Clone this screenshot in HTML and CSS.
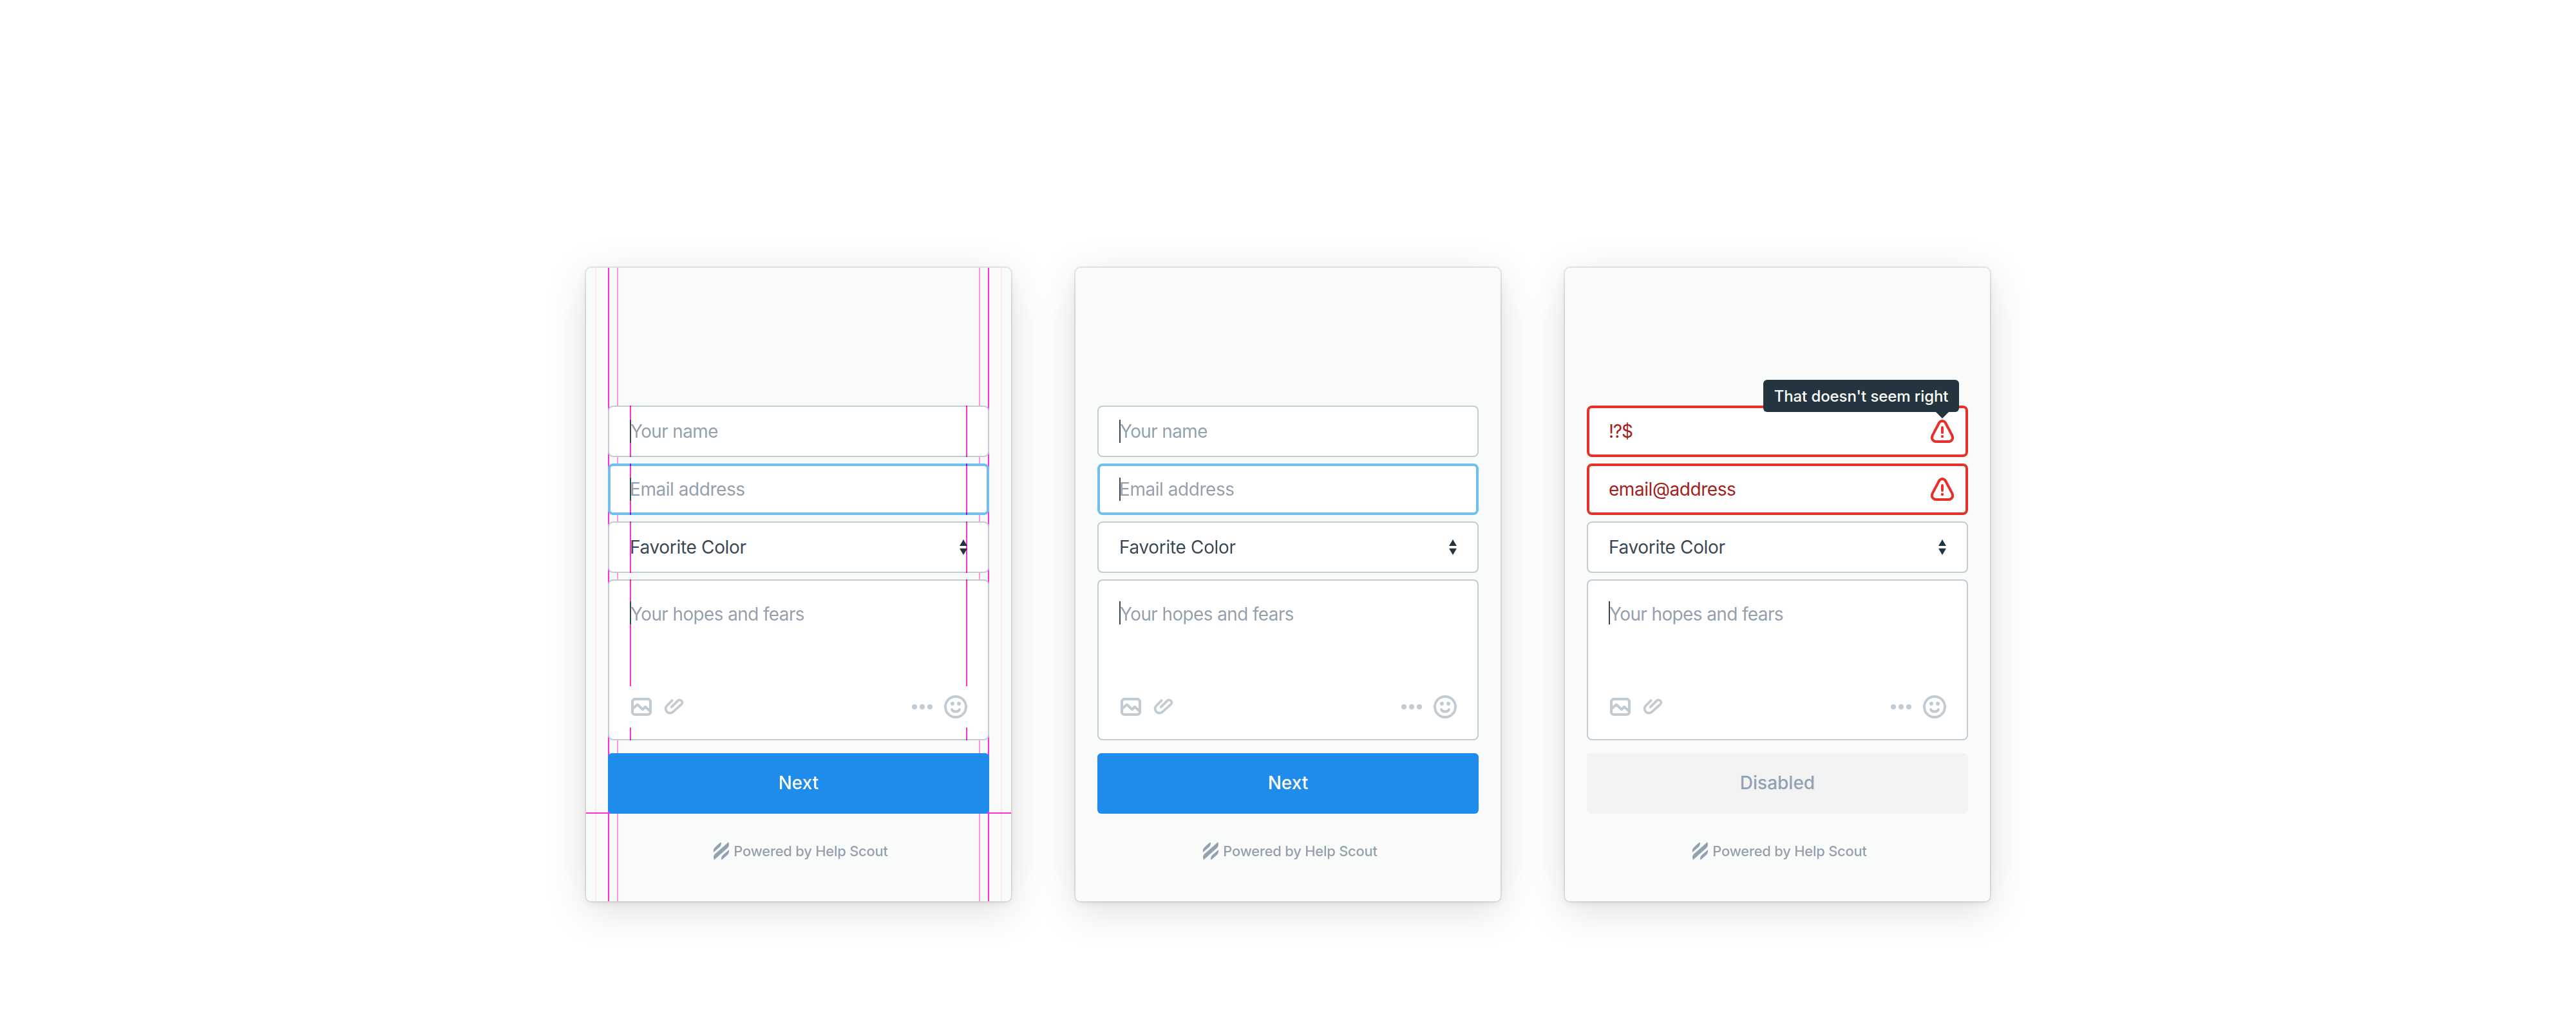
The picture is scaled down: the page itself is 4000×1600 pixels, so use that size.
FILE: index.html
```html
<!DOCTYPE html>
<html lang="en">
<head>
<meta charset="utf-8">
<title>Form states</title>
<link rel="stylesheet" href="styles.css">
</head>
<body>
<svg class="sprite" aria-hidden="true">
  <symbol id="image" viewBox="0 0 32 28"><rect x="2" y="2" width="28" height="24" rx="4" fill="none" stroke="currentColor" stroke-width="4"/><path d="M3 16.500L9.800 10.500L18 18L22 14L29.500 20.500" fill="none" stroke="currentColor" stroke-width="4" stroke-linejoin="round"/></symbol>
  <symbol id="clip" viewBox="0 0 32 26"><path d="M12.600 3.200L4.600 11.200A6.600 6.600 0 0 0 14 20.800L27.300 9A4 4 0 0 0 21.700 3.300L11.600 13.400" fill="none" stroke="currentColor" stroke-width="3.800" stroke-linecap="round"/></symbol>
  <symbol id="dots" viewBox="0 0 32 8"><circle cx="4" cy="4" r="4"/><circle cx="16" cy="4" r="4"/><circle cx="28" cy="4" r="4"/></symbol>
  <symbol id="smile" viewBox="0 0 36 36"><circle cx="18" cy="18" r="16" fill="none" stroke="currentColor" stroke-width="4"/><circle cx="13" cy="13" r="3"/><circle cx="23" cy="13" r="3"/><path d="M12 22a6.200 4.600 0 0 0 12 0" fill="none" stroke="currentColor" stroke-width="4" stroke-linecap="round"/></symbol>
  <symbol id="sort" viewBox="0 0 12 24"><path d="M6 0L12 10H0ZM6 24L0 14H12Z"/></symbol>
  <symbol id="warn" viewBox="0 0 36 36"><path d="M12.700 5.500Q14.500 2 18 2T23.300 5.500L33 23.800Q35.200 28.200 33 31.200T27.500 34H8.500Q5.200 34 3 31.200T3 23.800Z" fill="none" stroke="currentColor" stroke-width="4"/><path d="M18 12V20" fill="none" stroke="currentColor" stroke-width="4" stroke-linecap="round"/><circle cx="18" cy="26" r="2.200"/></symbol>
  <symbol id="logo" viewBox="0 0 24 28"><path d="M11.300 0L2.500 8Q0 10.500 0 13V16L9.800 7.600Q12 5.500 12 2.500ZM23.200 0L2 18.700Q0 20.600 0 23.500L.8 28L22 9Q24 7 24 4ZM24 12L14.200 20.400Q12 22.500 12 25.500L12.700 28L21.500 20Q24 17.500 24 15Z"/></symbol>
</svg>

<main class="board">
  <section class="card card-guides">
    <div class="guides">
      <i class="guide faint"></i><i class="guide strong"></i><i class="guide medium"></i>
      <i class="guide medium end"></i><i class="guide strong end"></i><i class="guide faint end"></i>
      <i class="guide baseline"></i>
    </div>
    <form class="form">
      <div class="field"><i class="caret"></i><span class="hint hint-name">Your name</span></div>
      <div class="field focus"><i class="caret"></i><span class="hint">Email address</span></div>
      <div class="field"><span class="value value-select">Favorite Color</span><svg class="sort"><use href="#sort"/></svg></div>
      <div class="field area">
        <div class="entry"><i class="caret"></i><span class="hint hint-area">Your hopes and fears</span></div>
        <div class="tools"><svg class="t-image"><use href="#image"/></svg><svg class="t-clip"><use href="#clip"/></svg><svg class="t-dots"><use href="#dots"/></svg><svg class="t-smile"><use href="#smile"/></svg></div>
      </div>
      <div class="button">Next</div>
    </form>
    <footer class="powered"><svg class="logo"><use href="#logo"/></svg><span>Powered by Help Scout</span></footer>
  </section>

  <section class="card">
    <form class="form">
      <div class="field"><i class="caret"></i><span class="hint hint-name">Your name</span></div>
      <div class="field focus"><i class="caret"></i><span class="hint">Email address</span></div>
      <div class="field"><span class="value value-select">Favorite Color</span><svg class="sort"><use href="#sort"/></svg></div>
      <div class="field area">
        <div class="entry"><i class="caret"></i><span class="hint hint-area">Your hopes and fears</span></div>
        <div class="tools"><svg class="t-image"><use href="#image"/></svg><svg class="t-clip"><use href="#clip"/></svg><svg class="t-dots"><use href="#dots"/></svg><svg class="t-smile"><use href="#smile"/></svg></div>
      </div>
      <div class="button">Next</div>
    </form>
    <footer class="powered"><svg class="logo"><use href="#logo"/></svg><span>Powered by Help Scout</span></footer>
  </section>

  <section class="card">
    <form class="form">
      <div class="field error"><span class="value value-symbols">!?$</span><svg class="warn"><use href="#warn"/></svg><div class="tooltip">That doesn't seem right</div></div>
      <div class="field error"><span class="value">email@address</span><svg class="warn"><use href="#warn"/></svg></div>
      <div class="field"><span class="value value-select">Favorite Color</span><svg class="sort"><use href="#sort"/></svg></div>
      <div class="field area">
        <div class="entry"><i class="caret"></i><span class="hint hint-area">Your hopes and fears</span></div>
        <div class="tools"><svg class="t-image"><use href="#image"/></svg><svg class="t-clip"><use href="#clip"/></svg><svg class="t-dots"><use href="#dots"/></svg><svg class="t-smile"><use href="#smile"/></svg></div>
      </div>
      <div class="button disabled">Disabled</div>
    </form>
    <footer class="powered"><svg class="logo"><use href="#logo"/></svg><span>Powered by Help Scout</span></footer>
  </section>
</main>
</body>
</html>
```
FILE: styles.css
```css
* { box-sizing: border-box; }

body {
  margin: 0;
  background: #fff;
  font-family: Inter, "Liberation Sans", sans-serif;
  color: #394956;
}

svg { display: block; fill: currentColor; flex: none; }
.sprite { position: absolute; width: 0; height: 0; }

.board {
  display: flex;
  justify-content: center;
  gap: 100px;
  height: 1600px;
  padding-top: 416px;
}

.card {
  position: relative;
  display: flex;
  flex-direction: column;
  width: 660px;
  height: 984px;
  padding: 214px 34px 0;
  border-radius: 8px;
  background: #f9fbfa;
  box-shadow:
    0 0 0 2px rgba(0, 0, 0, .08),
    0 4px 12px rgba(0, 0, 0, .06),
    0 14px 64px rgba(0, 0, 0, .13);
}

.form {
  position: relative;
  display: flex;
  flex-direction: column;
  gap: 10px;
}

/* Inputs */
.field {
  position: relative;
  display: flex;
  align-items: center;
  justify-content: space-between;
  height: 80px;
  padding: 0 32px;
  border: 2px solid #c1cbd4;
  border-radius: 8px;
  background: #fff;
  font-size: 28px;
  line-height: 36px;
  letter-spacing: -.45px;
  white-space: nowrap;
}
.field.focus { padding: 0 30px; border: 4px solid #71bff0; }
.field.error { padding: 0 18px 0 30px; border: 4px solid #e82f28; color: #a4211b; }

.hint { color: #93a1af; }
.hint-name { padding-left: 1px; letter-spacing: -.65px; }
.hint-area { position: relative; top: 2px; padding-left: 1px; letter-spacing: -.63px; }
.value-select { letter-spacing: -.33px; }
.value-symbols { letter-spacing: -1.2px; }

.caret {
  position: absolute;
  z-index: 1;
  width: 2px;
  height: 36px;
  background: #394956;
}

.sort { width: 12px; height: 24px; color: #253540; }
.warn { width: 36px; height: 36px; color: #e82f28; }

.area { flex-direction: column; align-items: stretch; height: 250px; padding: 0 0 18px; }
.entry { padding: 32px 32px 0; }
.tools {
  position: relative;
  z-index: 1;
  display: flex;
  align-items: center;
  height: 64px;
  padding: 0 32px 0 34px;
  background: #fff;
  color: #c1cbd4;
}
.t-image { width: 32px; height: 28px; }
.t-clip { width: 32px; height: 26px; margin-left: 19px; }
.t-dots { width: 32px; height: 8px; margin: 0 18px 0 auto; }
.t-smile { width: 36px; height: 36px; }

/* Buttons */
.button {
  height: 94px;
  margin-top: 10px;
  border-radius: 6px;
  background: #1f8ceb;
  color: #fff;
  font-size: 28px;
  font-weight: 500;
  line-height: 92px;
  text-align: center;
}
.button.disabled { background: #f1f3f5; color: #93a1af; }

.powered {
  position: relative;
  display: flex;
  align-items: center;
  justify-content: center;
  gap: 7px;
  height: 28px;
  margin-top: 44px;
  padding-left: 7px;
  color: #93a1af;
  font-size: 22px;
  font-weight: 500;
  letter-spacing: -.27px;
  white-space: nowrap;
}
.logo { width: 24px; height: 28px; }

/* Error tooltip */
.tooltip {
  position: absolute;
  right: 10px;
  bottom: 66px;
  width: 304px;
  height: 50px;
  border-radius: 6px;
  background: #253540;
  color: #fff;
  font-size: 24px;
  font-weight: 500;
  line-height: 51px;
  letter-spacing: -.1px;
  text-align: center;
}
.tooltip::after {
  content: "";
  position: absolute;
  top: 100%;
  right: 16px;
  border: 10px solid transparent;
  border-top-color: #253540;
  border-bottom: 0;
}

/* Layout guides */
.guides { position: absolute; inset: 0; }
.guide { position: absolute; top: 0; bottom: 0; width: 2px; background: #ff2fd4; }
.guide.faint { left: 14px; opacity: .1; }
.guide.strong { left: 34px; }
.guide.medium { left: 48px; opacity: .5; }
.guide.end { left: auto; }
.guide.faint.end { right: 14px; }
.guide.strong.end { right: 34px; }
.guide.medium.end { right: 48px; }
.guide.baseline { top: 846px; bottom: auto; width: 100%; height: 2px; }

.card-guides .field::before,
.card-guides .field::after {
  content: "";
  position: absolute;
  top: -2px;
  bottom: -2px;
  left: 32px;
  width: 2px;
  background: #ff2fd4;
  mix-blend-mode: multiply;
}
.card-guides .field::after { left: auto; right: 32px; }
.card-guides .focus::before,
.card-guides .focus::after { top: -4px; bottom: -4px; left: 30px; }
.card-guides .focus::after { left: auto; right: 30px; }
```
